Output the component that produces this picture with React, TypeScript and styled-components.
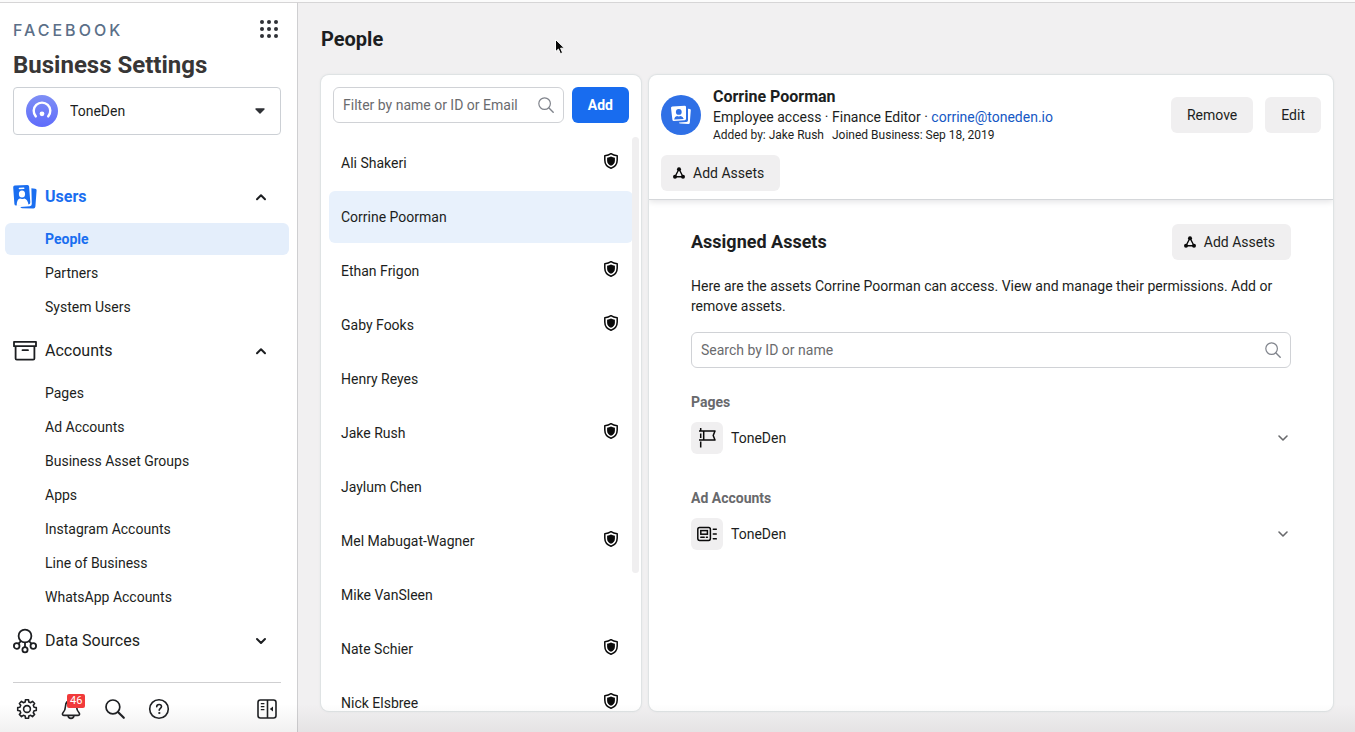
import React from "react";
import styled, { createGlobalStyle } from "styled-components";

const GlobalStyle = createGlobalStyle`
  * { box-sizing: border-box; }
  body {
    margin: 0;
    background: #f1f0f1;
    color: #1c1e21;
    font-family: Roboto, "Liberation Sans", sans-serif;
    font-size: 14px;
    line-height: 20px;
  }
  button, input, select { font: inherit; color: inherit; }
  button { cursor: pointer; }
  a { color: inherit; text-decoration: none; }
  ul { list-style: none; margin: 0; padding: 0; }
  h1, h2, h3, p { margin: 0; }
  svg { display: block; flex: none; }
`;

const Page = styled.div`
  display: flex;
  height: 100vh;
  min-height: 480px;
  border-top: 2px solid #fbfbfb;
  position: relative;
  overflow: hidden;
`;

/* ---------- sidebar ---------- */

const Sidebar = styled.aside`
  flex: none;
  width: 298px;
  display: flex;
  flex-direction: column;
  background: #fff;
  border-right: 1px solid #cfcfd1;
  border-top: 1px solid #d6d5d6;
`;

const SidebarTop = styled.header`
  padding: 14px 16px 0 13px;
`;

const BrandRow = styled.div`
  display: flex;
  align-items: center;
  justify-content: space-between;
  height: 24px;
  padding-right: 3px;
`;

const Wordmark = styled.span`
  padding-top: 2px;
  font-family: Inter, sans-serif;
  font-size: 16px;
  font-weight: 500;
  letter-spacing: 3px;
  color: #5b6f88;
`;

const IconButton = styled.button`
  position: relative;
  display: flex;
  padding: 0;
  border: 0;
  background: none;
`;

const ProductTitle = styled.h1`
  margin-top: 8px;
  font-size: 24px;
  line-height: 32px;
  color: #383636;
`;

const AccountPicker = styled.label`
  display: flex;
  align-items: center;
  gap: 12px;
  height: 48px;
  margin-top: 6px;
  padding: 0 14px 0 12px;
  border: 1px solid #ccd0d5;
  border-radius: 4px;
`;

const AccountSelect = styled.select`
  flex: 1;
  min-width: 0;
  padding: 0;
  border: 0;
  appearance: none;
  background: none;
`;

const Nav = styled.nav`
  flex: 1;
  min-height: 0;
  overflow: hidden;
  padding: 41px 8px 0 5px;
`;

const SectionButton = styled.button<{ $active?: boolean }>`
  display: flex;
  align-items: center;
  gap: 8px;
  width: 100%;
  height: 40px;
  padding: 2px 22px 0 8px;
  border: 0;
  background: none;
  font-size: 16px;
  text-align: left;
  font-weight: ${(p) => (p.$active ? 700 : 400)};
  color: ${(p) => (p.$active ? "#1a6ef0" : "#1c1e21")};
`;

const SectionLabel = styled.span`
  flex: 1;
`;

const SectionList = styled.ul`
  display: grid;
  gap: 2px;
  padding: 7px 0;
`;

const NavLink = styled.a<{ $active?: boolean }>`
  display: block;
  padding: 6px 40px;
  border-radius: 6px;
  font-weight: ${(p) => (p.$active ? 700 : 400)};
  color: ${(p) => (p.$active ? "#1a6ef0" : "inherit")};
  background: ${(p) => (p.$active ? "#e4eefb" : "none")};
`;

const SidebarFooter = styled.footer`
  display: flex;
  align-items: center;
  gap: 20px;
  height: 50px;
  margin: 0 16px 0 13px;
  padding: 2px 2px 0;
  border-top: 1px solid #cfcfd1;

  button:last-child { margin-left: auto; }
`;

const Count = styled.span`
  position: absolute;
  top: -3px;
  left: 8px;
  padding: 0 3px;
  border-radius: 2px;
  background: #f13a3a;
  color: #fff;
  font-size: 11px;
  line-height: 14px;
`;

/* ---------- main area ---------- */

const Main = styled.main`
  flex: 1;
  min-width: 0;
  display: flex;
  flex-direction: column;
  padding: 0 22px 21px 23px;
  border-top: 1px solid #d6d5d6;
`;

const PageTitle = styled.h2`
  padding: 22px 0;
  font-size: 20px;
  line-height: 28px;
`;

const Columns = styled.div`
  flex: 1;
  min-height: 0;
  display: grid;
  grid-template-columns: 320px minmax(0, 1fr);
  gap: 8px;
`;

const Panel = styled.section`
  position: relative;
  display: flex;
  flex-direction: column;
  min-height: 0;
  overflow: hidden;
  border-radius: 8px;
  background: #fff;
  box-shadow: 0 0 0 1px #dfe3e4, 0 0 3px #d4d8da;
`;

const FilterRow = styled.div`
  display: flex;
  gap: 8px;
  padding: 12px 12px 14px;
`;

const SearchField = styled.label`
  flex: 1;
  min-width: 0;
  display: flex;
  align-items: center;
  height: 36px;
  padding: 0 9px;
  border: 1px solid #d0d2d6;
  border-radius: 6px;
`;

const SearchInput = styled.input`
  flex: 1;
  min-width: 0;
  padding: 0;
  border: 0;
  outline: 0;
  background: none;

  &::placeholder { color: #6a6b6e; opacity: 1; }
`;

const Button = styled.button<{ $primary?: boolean }>`
  display: flex;
  align-items: center;
  gap: 8px;
  flex: none;
  height: 36px;
  padding: 0 16px;
  border: 0;
  border-radius: 6px;
  font-weight: ${(p) => (p.$primary ? 700 : 400)};
  color: ${(p) => (p.$primary ? "#fff" : "#1c1e21")};
  background: ${(p) => (p.$primary ? "#186cef" : "#f0eff0")};
`;

const AssetsButtonBox = styled(Button)`
  padding-left: 12px;
`;

const PeopleArea = styled.div`
  position: relative;
  flex: 1;
  min-height: 0;
`;

const PeopleList = styled.ul`
  display: grid;
  gap: 2px;
  height: 100%;
  align-content: start;
  overflow: hidden;
  padding: 0 8px;
`;

const PersonRow = styled.button<{ $selected?: boolean }>`
  display: flex;
  align-items: center;
  justify-content: space-between;
  width: 100%;
  height: 52px;
  padding: 0 14px 0 12px;
  border: 0;
  border-radius: 6px;
  text-align: left;
  background: ${(p) => (p.$selected ? "#e8f1fc" : "none")};

  svg { margin-bottom: 4px; }
`;

const ScrollThumb = styled.div`
  position: absolute;
  top: 0;
  right: 2px;
  width: 7px;
  height: 76%;
  border-radius: 4px;
  background: #f0eff0;
`;

const DetailHeader = styled.header`
  padding: 12px 12px 8px;
  border-bottom: 1px solid #d5d7da;
  box-shadow: 0 2px 6px #e4e4e6;
`;

const Identity = styled.div`
  display: flex;
  align-items: center;
  gap: 12px;
  margin-bottom: 12px;
`;

const IdentityText = styled.div`
  flex: 1;
  min-width: 0;
`;

const PersonName = styled.h2`
  font-size: 16px;
  line-height: 20px;
`;

const EmailLink = styled.a`
  color: #1558c4;
`;

const Meta = styled.p`
  display: flex;
  gap: 8px;
  font-size: 12px;
  line-height: 16px;
`;

const DetailBody = styled.div`
  width: 100%;
  max-width: 648px;
  margin: 0 auto;
  padding: 24px;
`;

const BodyHeading = styled.div`
  display: flex;
  align-items: center;
  justify-content: space-between;
`;

const BodyTitle = styled.h3`
  font-size: 18px;
  line-height: 24px;
`;

const Description = styled.p`
  margin: 16px 0;
`;

const AssetGroup = styled.section`
  display: grid;
  gap: 10px;
  padding: 24px 0 10px;
`;

const AssetKind = styled.h3`
  font-size: 14px;
  line-height: 20px;
  color: #68696c;
`;

const AssetRow = styled.button`
  display: flex;
  align-items: center;
  gap: 8px;
  width: 100%;
  padding: 0 2px 0 0;
  border: 0;
  background: none;
  text-align: left;
`;

const AssetIcon = styled.span`
  display: grid;
  place-items: center;
  width: 32px;
  height: 32px;
  border-radius: 6px;
  background: #f0eff0;
`;

const AssetName = styled.span`
  flex: 1;
`;

const BottomShade = styled.div`
  position: absolute;
  inset: auto 0 0 0;
  height: 28px;
  pointer-events: none;
  background: linear-gradient(rgba(120, 112, 116, 0), rgba(120, 112, 116, 0.1));
`;

const Pointer = styled.svg`
  position: absolute;
  left: 554px;
  top: 36px;
  pointer-events: none;
`;

/* ---------- icons ---------- */

const AppsIcon = () => (
  <svg width="18" height="18" fill="#2f3136">
    {[2, 9, 16].map((y) => [2, 9, 16].map((x) => <circle key={`${x}-${y}`} cx={x} cy={y} r="2" />))}
  </svg>
);

const ToneDenLogo = () => (
  <svg width="32" height="32" viewBox="0 0 32 32">
    <defs>
      <linearGradient id="toneden" x1="0" y1="0" x2="0" y2="1">
        <stop offset="0" stopColor="#7f8ff5" />
        <stop offset="1" stopColor="#5f6cfb" />
      </linearGradient>
    </defs>
    <circle cx="16" cy="16" r="16" fill="url(#toneden)" />
    <path d="M9.8 21.4A8.3 8.3 0 1 1 22.2 21.4" fill="none" stroke="#fff" strokeWidth="2.4" strokeLinecap="round" />
    <circle cx="16" cy="18.8" r="2.4" fill="#fff" />
  </svg>
);

const CaretIcon = () => (
  <svg width="12" height="8" viewBox="0 0 12 8">
    <path d="M2 2h8L6 6z" fill="#2f3136" stroke="#2f3136" strokeWidth="1.4" strokeLinejoin="round" />
  </svg>
);

const Chevron = ({ up, color = "#1c1e21", width = 2 }: { up?: boolean; color?: string; width?: number }) => (
  <svg width="12" height="12" viewBox="0 0 12 12" fill="none" stroke={color} strokeWidth={width} strokeLinecap="round" strokeLinejoin="round">
    <path d={up ? "M2 8.2 6 4.2l4 4" : "M2 4l4 4 4-4"} />
  </svg>
);

const UsersIcon = () => (
  <svg width="24" height="26" viewBox="0 0 24 26">
    <path d="M18.4 4.2 22.2 4.7q1.500.2 1.400 1.600L22.400 22.600q-.2 2-2.200 1.900L9 24.300q-1.400-.2-1.600-1.200l9.400-.9q2-.2 2-2.200z" fill="#1a6ef0" />
    <path d="M1.800 1.600 14.300.9q1.700-.1 1.800 1.500l1.200 15.800q.1 1.900-1.700 2.200L3.300 21.600q-1.700.1-1.900-1.500L.2 3.400Q.1 1.700 1.800 1.600z" fill="#1a6ef0" />
    <path d="M6.400 4.500 10.800 4.200" stroke="#fff" strokeWidth="1.400" strokeLinecap="round" />
    <ellipse cx="9" cy="10" rx="3.100" ry="3.500" fill="#fff" />
    <path d="M3.700 22Q3.600 15.400 6.900 14.600q2.200 1 4.400-.1 3.500.6 4.200 6.500z" fill="#fff" />
  </svg>
);

const ArchiveIcon = () => (
  <svg width="24" height="24" viewBox="0 0 24 24" fill="none" stroke="#1c1e21" strokeWidth="1.800" strokeLinejoin="round" strokeLinecap="round">
    <path d="M1 2.800h22v4.400H1zM2.600 7.200h18.800v12.200q0 1.200-1.200 1.200H3.800q-1.200 0-1.200-1.200zM9.500 11.200h5.500" />
  </svg>
);

const DataIcon = () => (
  <svg width="24" height="26" viewBox="0 0 24 26" fill="none" stroke="#1c1e21" strokeWidth="1.800">
    <circle cx="12" cy="8" r="6.400" />
    <circle cx="3.700" cy="18" r="2.800" />
    <circle cx="20.300" cy="18" r="2.800" />
    <circle cx="12" cy="21.800" r="2.600" />
    <path d="M8 13 5.400 15.800M16 13l2.600 2.800M12 14.400v4.800" />
  </svg>
);

const gearPath = (() => {
  const points: string[] = [];
  for (let i = 0; i < 8; i++) {
    [[-0.25, 7.3], [-0.16, 9.4], [0.16, 9.4], [0.25, 7.3]].forEach(([offset, radius]) => {
      const angle = (i * Math.PI) / 4 + offset;
      points.push(`${(11 + radius * Math.sin(angle)).toFixed(2)} ${(11 - radius * Math.cos(angle)).toFixed(2)}`);
    });
  }
  return `M${points.join("L")}Z`;
})();

const GearIcon = () => (
  <svg width="24" height="24" viewBox="-1 -1 24 24" fill="none" stroke="#1c1e21" strokeWidth="1.600" strokeLinejoin="round">
    <path d={gearPath} />
    <circle cx="11" cy="11" r="3.400" />
  </svg>
);

const BellIcon = () => (
  <svg width="24" height="24" viewBox="0 0 24 24" fill="none" stroke="#1c1e21" strokeWidth="1.600" strokeLinejoin="round" strokeLinecap="round">
    <path d="M12 3.600c-3.800 0-5.400 2.600-5.500 5.600-.1 3.400-1.100 5-2.500 6.600-1 1.200-.6 2.600.8 2.600h14.400c1.400 0 1.800-1.400.8-2.600-1.400-1.600-2.400-3.200-2.500-6.600-.1-3-1.700-5.600-5.500-5.600zM9 18.700c.2 1.600 1.400 2.700 3 2.700s2.800-1.100 3-2.700" />
  </svg>
);

const MagnifierIcon = () => (
  <svg width="24" height="24" viewBox="0 0 24 24" fill="none" stroke="#1c1e21" strokeLinecap="round">
    <circle cx="9.900" cy="9.900" r="6.900" strokeWidth="1.700" />
    <path d="M15.200 15.200 20.800 20.800" strokeWidth="2.200" />
  </svg>
);

const FieldSearchIcon = () => (
  <svg width="16" height="16" viewBox="0 0 16 16" fill="none" stroke="#80848c" strokeLinecap="round">
    <circle cx="6.600" cy="6.600" r="5.800" strokeWidth="1.200" />
    <path d="M11 11 15.200 15.200" strokeWidth="1.400" />
  </svg>
);

const HelpIcon = () => (
  <svg width="24" height="24" viewBox="0 0 24 24" fill="none" stroke="#1c1e21" strokeWidth="1.600" strokeLinecap="round">
    <circle cx="12" cy="12" r="9.300" />
    <path d="M9.700 9.800c0-1.400 1-2.300 2.400-2.300s2.400.9 2.400 2.100c0 1.700-2.300 1.900-2.300 3.700" />
    <circle cx="12.200" cy="16" r=".6" fill="#1c1e21" strokeWidth="1" />
  </svg>
);

const CollapseIcon = () => (
  <svg width="24" height="24" viewBox="0 0 24 24" fill="none" stroke="#1c1e21" strokeWidth="1.600">
    <rect x="3" y="3" width="18" height="18" rx="2.400" />
    <path d="M12.500 3v18" />
    <path d="M5.800 6.600h3.600M5.800 9.600h3.600M5.800 12.600h3.600" strokeWidth="1.300" />
    <path d="M18 9.400v5.200L14.800 12z" fill="#1c1e21" stroke="none" />
  </svg>
);

const ShieldIcon = () => (
  <svg width="16" height="18" viewBox="0 0 16 18">
    <path d="M8 1.700c2 1.500 3.900 1.900 6.200 2v4.400c0 4-2.400 6.900-6.200 8.100-3.800-1.200-6.200-4.100-6.200-8.100V3.700c2.300-.1 4.200-.5 6.200-2z" fill="none" stroke="#0a0a0a" strokeWidth="1.500" strokeLinejoin="round" />
    <path d="M8 4.500c1.300.8 2.500 1.100 3.900 1.200v3c0 2.300-1.500 4.300-3.900 5.100-2.400-.8-3.900-2.800-3.900-5.100v-3c1.400-.1 2.600-.4 3.900-1.200z" fill="#0a0a0a" />
  </svg>
);

const NodesIcon = () => (
  <svg width="12" height="12" viewBox="0 0 12 12" fill="#0a0a0a" stroke="#0a0a0a">
    <path d="M6 2 2 9.800h8z" fill="none" strokeWidth="1.400" />
    <circle cx="6" cy="2.200" r="2" stroke="none" />
    <circle cx="2" cy="9.800" r="2" stroke="none" />
    <circle cx="10" cy="9.800" r="2" stroke="none" />
  </svg>
);

const PersonAvatar = () => (
  <svg width="40" height="40" viewBox="0 0 40 40">
    <circle cx="20" cy="20" r="20" fill="#2f70e6" />
    <path d="M27 13.700 29 14q.9.200.8 1.200l-1 12.600q-.2 1.400-1.500 1.300l-8.300-.7q-.9-.2-1-1l7.400-.5q1.500-.2 1.600-1.700z" fill="#fff" />
    <path d="m11.300 11.600 12.400-.8q1.300 0 1.300 1.200v11.800q0 1.300-1.200 1.400l-11 .8q-1.300 0-1.400-1.200L10 13q-.1-1.300 1.300-1.400z" fill="#fff" />
    <circle cx="17.800" cy="16.900" r="2.900" fill="#2f70e6" />
    <path d="M13.100 24.500q.5-3 2.900-3.400 1.900.6 3.700-.1 2.300.3 3 3z" fill="#2f70e6" />
  </svg>
);

const FlagIcon = () => (
  <svg width="20" height="22" viewBox="0 0 20 22" fill="none" stroke="#0a0a0a" strokeWidth="1.500" strokeLinejoin="round">
    <path d="M3.700 1v2.500M3.700 6.500v4.500M3.700 14.500v6M2 4h16l-1.800 4.500L18 13H2M6.700 4v9" />
  </svg>
);

const AdIcon = () => (
  <svg width="20" height="20" viewBox="0 0 20 20" fill="none" stroke="#0a0a0a" strokeWidth="1.500" strokeLinecap="round">
    <rect x="0.800" y="3.600" width="12.600" height="12.800" rx="1.800" />
    <rect x="3.800" y="6.600" width="6.600" height="3.600" />
    <path d="M3.800 13.200h3.400M9.400 13.200h1M16.300 5.200h3M16.300 10h3M16.300 14.800h3" />
  </svg>
);

/* ---------- data ---------- */

const userLinks = ["People", "Partners", "System Users"];
const accountLinks = ["Pages", "Ad Accounts", "Business Asset Groups", "Apps", "Instagram Accounts", "Line of Business", "WhatsApp Accounts"];

const people = [
  { name: "Ali Shakeri", admin: true },
  { name: "Corrine Poorman", admin: false },
  { name: "Ethan Frigon", admin: true },
  { name: "Gaby Fooks", admin: true },
  { name: "Henry Reyes", admin: false },
  { name: "Jake Rush", admin: true },
  { name: "Jaylum Chen", admin: false },
  { name: "Mel Mabugat-Wagner", admin: true },
  { name: "Mike VanSleen", admin: false },
  { name: "Nate Schier", admin: true },
  { name: "Nick Elsbree", admin: true },
];

/* ---------- parts ---------- */

type NavSectionProps = { icon: React.ReactNode; label: string; links?: string[]; active?: string };

const NavSection = ({ icon, label, links, active }: NavSectionProps) => (
  <>
    <SectionButton $active={Boolean(active)} aria-expanded={Boolean(links)}>
      {icon}
      <SectionLabel>{label}</SectionLabel>
      <Chevron up={Boolean(links)} />
    </SectionButton>
    {links && (
      <SectionList>
        {links.map((link) => (
          <li key={link}>
            <NavLink href="#" $active={link === active}>{link}</NavLink>
          </li>
        ))}
      </SectionList>
    )}
  </>
);

const AddAssetsButton = () => (
  <AssetsButtonBox>
    <NodesIcon />
    Add Assets
  </AssetsButtonBox>
);

const Asset = ({ kind, icon }: { kind: string; icon: React.ReactNode }) => (
  <AssetGroup>
    <AssetKind>{kind}</AssetKind>
    <AssetRow aria-expanded={false}>
      <AssetIcon>{icon}</AssetIcon>
      <AssetName>ToneDen</AssetName>
      <Chevron color="#68696c" width={1.6} />
    </AssetRow>
  </AssetGroup>
);

export default function App() {
  const selected = "Corrine Poorman";

  return (
    <>
      <GlobalStyle />
      <Page>
        <Sidebar>
          <SidebarTop>
            <BrandRow>
              <Wordmark>FACEBOOK</Wordmark>
              <IconButton aria-label="All tools"><AppsIcon /></IconButton>
            </BrandRow>
            <ProductTitle>Business Settings</ProductTitle>
            <AccountPicker>
              <ToneDenLogo />
              <AccountSelect aria-label="Business account">
                <option>ToneDen</option>
              </AccountSelect>
              <CaretIcon />
            </AccountPicker>
          </SidebarTop>
          <Nav>
            <NavSection icon={<UsersIcon />} label="Users" links={userLinks} active="People" />
            <NavSection icon={<ArchiveIcon />} label="Accounts" links={accountLinks} />
            <NavSection icon={<DataIcon />} label="Data Sources" />
          </Nav>
          <SidebarFooter>
            <IconButton aria-label="Settings"><GearIcon /></IconButton>
            <IconButton aria-label="Notifications"><BellIcon /><Count>46</Count></IconButton>
            <IconButton aria-label="Search"><MagnifierIcon /></IconButton>
            <IconButton aria-label="Help"><HelpIcon /></IconButton>
            <IconButton aria-label="Collapse sidebar"><CollapseIcon /></IconButton>
          </SidebarFooter>
        </Sidebar>

        <Main>
          <PageTitle>People</PageTitle>
          <Columns>
            <Panel>
              <FilterRow>
                <SearchField>
                  <SearchInput type="text" aria-label="Filter people" placeholder="Filter by name or ID or Email" />
                  <FieldSearchIcon />
                </SearchField>
                <Button $primary>Add</Button>
              </FilterRow>
              <PeopleArea>
                <PeopleList>
                  {people.map(({ name, admin }) => (
                    <li key={name}>
                      <PersonRow $selected={name === selected}>
                        {name}
                        {admin && <ShieldIcon />}
                      </PersonRow>
                    </li>
                  ))}
                </PeopleList>
                <ScrollThumb />
              </PeopleArea>
            </Panel>

            <Panel>
              <DetailHeader>
                <Identity>
                  <PersonAvatar />
                  <IdentityText>
                    <PersonName>{selected}</PersonName>
                    <p>
                      Employee access · Finance Editor · <EmailLink href="#">corrine@toneden.io</EmailLink>
                    </p>
                    <Meta>
                      <span>Added by: Jake Rush</span>
                      <span>Joined Business: Sep 18, 2019</span>
                    </Meta>
                  </IdentityText>
                  <Button>Remove</Button>
                  <Button>Edit</Button>
                </Identity>
                <AddAssetsButton />
              </DetailHeader>
              <DetailBody>
                <BodyHeading>
                  <BodyTitle>Assigned Assets</BodyTitle>
                  <AddAssetsButton />
                </BodyHeading>
                <Description>
                  {`Here are the assets ${selected} can access. View and manage their permissions. Add or remove assets.`}
                </Description>
                <SearchField>
                  <SearchInput type="text" aria-label="Search assets" placeholder="Search by ID or name" />
                  <FieldSearchIcon />
                </SearchField>
                <Asset kind="Pages" icon={<FlagIcon />} />
                <Asset kind="Ad Accounts" icon={<AdIcon />} />
              </DetailBody>
            </Panel>
          </Columns>
        </Main>

        <BottomShade />
        <Pointer width="12" height="18" viewBox="0 0 12 18">
          <path d="M1.500 1.500v12.300l2.900-2.700 2 4.600 2.200-1-2-4.500h3.900z" fill="#0a0a0a" stroke="#fff" strokeWidth="1" />
        </Pointer>
      </Page>
    </>
  );
}
